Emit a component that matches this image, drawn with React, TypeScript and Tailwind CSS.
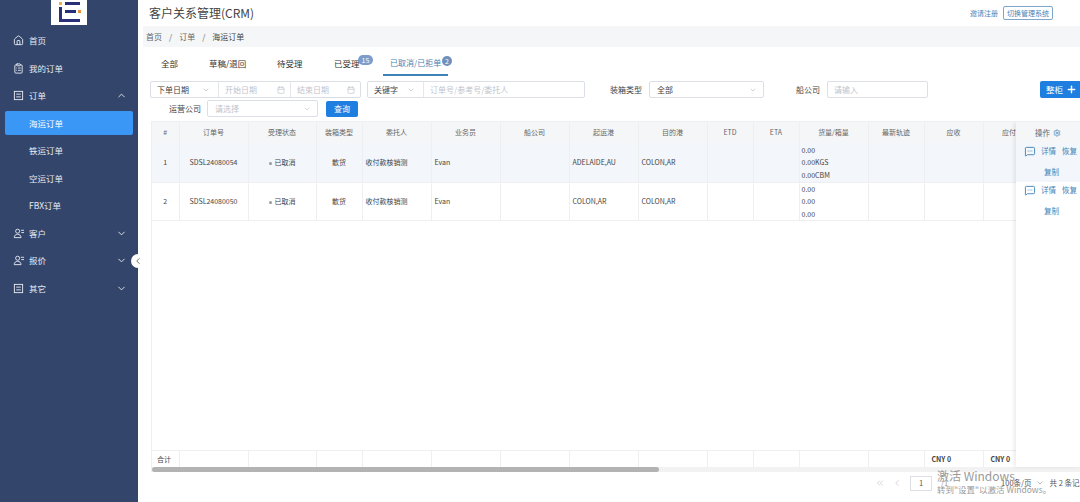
import {
  Calendar,
  ChevronDown,
  ChevronLeft,
  ChevronUp,
  ChevronsLeft,
  ClipboardList,
  House,
  MessageSquareMore,
  Plus,
  Settings,
} from "lucide-react";

const widths = [27, 69, 68, 46, 69, 69, 69, 69, 69, 46, 46, 69, 56, 59, 52];
const heads = ["#", "订单号", "受理状态", "装箱类型", "委托人", "业务员", "船公司", "起运港", "目的港", "ETD", "ETA", "货量/箱量", "最新轨迹", "应收", "应付"];

const rows = [
  { no: 1, id: "SDSL24080054", from: "ADELAIDE,AU", to: "COLON,AR", vol: ["0.00", "0.00KGS", "0.00CBM"], h: "h-[39px]", bg: "bg-[#f3f6fa]" },
  { no: 2, id: "SDSL24080050", from: "COLON,AR", to: "COLON,AR", vol: ["0.00", "0.00", "0.00"], h: "h-[38px]", bg: "bg-white" },
];

function Cols() {
  return (
    <colgroup>
      {widths.map((w, i) => (
        <col key={i} style={{ width: w }} />
      ))}
    </colgroup>
  );
}

function DocIcon() {
  return (
    <svg viewBox="0 0 12 12" className="h-[11px] w-[11px]" fill="none" stroke="currentColor" strokeWidth="1">
      <rect x="1.5" y="1.5" width="9" height="9" />
      <path d="M3.5 4.5h5M3.5 7.5h5" />
    </svg>
  );
}

function UserLinesIcon() {
  return (
    <svg viewBox="0 0 12 12" className="h-[11px] w-[12px]" fill="none" stroke="currentColor" strokeWidth="1">
      <circle cx="4.5" cy="3.5" r="2.2" />
      <path d="M0.8 10.5c0-2.4 1.6-3.6 3.7-3.6s3.7 1.2 3.7 3.6z" />
      <path d="M8 2.5h3.5M8.5 5h3" />
    </svg>
  );
}

function NavItem({ icon, label, arrow }: { icon?: React.ReactNode; label: string; arrow?: "up" | "down" }) {
  return (
    <div className="flex h-[27.5px] items-center pl-[13px] pr-[11px] text-[8.5px] text-[#e6eaf2]">
      <span className="flex w-[16px] shrink-0">{icon}</span>
      <span>{label}</span>
      {arrow === "up" && <ChevronUp className="ml-auto h-[11px] w-[11px]" />}
      {arrow === "down" && <ChevronDown className="ml-auto h-[11px] w-[11px]" />}
    </div>
  );
}

function Sidebar() {
  const ic = "h-[11px] w-[11px]";
  return (
    <aside className="relative z-10 flex h-full w-[138px] shrink-0 flex-col bg-[#34456b]">
      <div className="flex h-[27px] shrink-0 justify-center">
        <div className="flex h-[25px] w-[36px] items-center justify-center bg-white">
          <svg viewBox="0 0 36 25" className="h-[25px] w-[36px]">
            <rect x="8" y="2" width="3" height="3" fill="#f0b040" />
            <rect x="8" y="7" width="3" height="14" fill="#2a2f7a" />
            <rect x="8" y="19" width="21" height="3" fill="#2a2f7a" />
            <rect x="14" y="2" width="15" height="3" fill="#2a2f7a" />
            <rect x="14" y="10" width="11" height="3" fill="#2a2f7a" />
            <rect x="27" y="10" width="3" height="3" fill="#e8903a" />
          </svg>
        </div>
      </div>
      <NavItem icon={<House className={ic} />} label="首页" />
      <NavItem icon={<ClipboardList className={ic} />} label="我的订单" />
      <NavItem icon={<DocIcon />} label="订单" arrow="up" />
      <div className="flex h-[27.5px] items-center px-[5px]">
        <div className="flex h-[24px] w-full items-center rounded-[2px] bg-[#3b97f6] pl-[24px] text-[8.5px] text-white">海运订单</div>
      </div>
      {["铁运订单", "空运订单", "FBX订单"].map((t) => (
        <div key={t} className="flex h-[27.5px] items-center pl-[29px] text-[8.5px] text-[#e6eaf2]">
          {t}
        </div>
      ))}
      <NavItem icon={<UserLinesIcon />} label="客户" arrow="down" />
      <NavItem icon={<UserLinesIcon />} label="报价" arrow="down" />
      <NavItem icon={<DocIcon />} label="其它" arrow="down" />
      <div className="absolute left-[131px] top-[254px] flex h-[14px] w-[14px] items-center justify-center rounded-full bg-white text-[#555]">
        <ChevronLeft className="h-[10px] w-[10px]" />
      </div>
    </aside>
  );
}

function Tabs() {
  return (
    <div className="flex h-[29px] items-start pl-[18px] text-[8.5px] text-[#333]">
      <span className="mt-[10px] w-[48px]">全部</span>
      <span className="mt-[10px] w-[68px]">草稿/退回</span>
      <span className="mt-[10px] w-[57px]">待受理</span>
      <span className="relative mt-[10px] w-[49px]">
        已受理
        <span className="absolute left-[24px] top-[-2px] flex h-[10px] w-[15px] items-center justify-center rounded-full bg-[#7d9cc9] text-[7px] leading-none text-white">15</span>
      </span>
      <div className="relative h-[29px] w-[65px] border-b-2 border-[#3f82b8] pl-[7px] pt-[10px] text-[8px] text-[#3f82b8]">
        已取消/已拒单
        <span className="absolute left-[59px] top-[9px] flex h-[10px] w-[10px] items-center justify-center rounded-full bg-[#6f8fbd] text-[7px] leading-none text-white">2</span>
      </div>
    </div>
  );
}

function Filters() {
  const box = "flex h-[17px] shrink-0 items-center border border-[#dcdfe6] text-[8px]";
  return (
    <div className="pl-[7px] text-[8px] text-[#444]">
      <div className="mt-[5px] flex items-center">
        <div className={`${box} w-[211px] rounded-[2px]`}>
          <div className="flex h-full w-[68px] items-center justify-between border-r border-[#e5e7eb] pl-[6px] pr-[8px]">
            下单日期 <ChevronDown className="h-[8px] w-[8px] text-[#bbb]" />
          </div>
          <div className="flex h-full w-[72px] items-center justify-between border-r border-[#e5e7eb] pl-[6px] pr-[5px] text-[#c0c4cc]">
            开始日期 <Calendar className="h-[8px] w-[8px]" />
          </div>
          <div className="flex h-full flex-1 items-center justify-between pl-[6px] pr-[5px] text-[#c0c4cc]">
            结束日期 <Calendar className="h-[8px] w-[8px]" />
          </div>
        </div>
        <div className={`${box} ml-[6px] w-[218px] rounded-[2px]`}>
          <div className="flex h-full w-[56px] items-center justify-between border-r border-[#e5e7eb] pl-[6px] pr-[8px]">
            关键字 <ChevronDown className="h-[8px] w-[8px] text-[#bbb]" />
          </div>
          <div className="pl-[6px] text-[#c0c4cc]">订单号/参考号/委托人</div>
        </div>
        <span className="ml-[25px] w-[39px] shrink-0">装箱类型</span>
        <div className={`${box} w-[115px] justify-between rounded-[2px] pl-[7px] pr-[6px]`}>
          全部 <ChevronDown className="h-[8px] w-[8px] text-[#bbb]" />
        </div>
        <span className="ml-[32px] w-[31px] shrink-0">船公司</span>
        <div className={`${box} w-[101px] rounded-[2px] pl-[6px] text-[#c0c4cc]`}>请输入</div>
        <div className="ml-[112px] flex h-[17px] w-[50px] shrink-0 items-center rounded-[2px] bg-[#1f7fe0] pl-[6px] text-[8.5px] text-white">
          整柜 <Plus className="ml-[3px] h-[11px] w-[11px]" strokeWidth={3} />
        </div>
      </div>
      <div className="mt-[2px] flex items-center">
        <span className="ml-[19px] w-[38px] shrink-0">运营公司</span>
        <div className={`${box} w-[111px] justify-between rounded-[2px] pl-[7px] pr-[6px] text-[#c0c4cc]`}>
          请选择 <ChevronDown className="h-[8px] w-[8px]" />
        </div>
        <div className="ml-[8px] flex h-[16px] w-[32px] items-center justify-center rounded-[2px] bg-[#1f7fe0] text-[8px] text-white">查询</div>
      </div>
    </div>
  );
}

function OrderTable() {
  const cell = "border-r border-[#eeeff1] overflow-hidden whitespace-nowrap";
  return (
    <div className="relative ml-[8px] mt-[4px] flex h-[351px] flex-col overflow-hidden border-l border-t border-[#eeeff1] text-[7px] text-[#444]">
      <table className="w-[883px] table-fixed border-collapse">
        <Cols />
        <thead>
          <tr className="h-[21px] bg-[#f5f6f7] text-[#666]">
            {heads.map((h) => (
              <th key={h} className={`${cell} font-normal`}>
                {h}
              </th>
            ))}
          </tr>
        </thead>
        <tbody>
          {rows.map((r) => (
            <tr key={r.no} className={`${r.h} ${r.bg} border-b border-[#eeeff1]`}>
              <td className={`${cell} text-center`}>{r.no}</td>
              <td className={`${cell} text-center`}>{r.id}</td>
              <td className={`${cell} text-center`}>
                <span className="mr-[3px] inline-block h-[3px] w-[3px] rounded-full bg-[#999] align-middle" />
                已取消
              </td>
              <td className={`${cell} text-center`}>散货</td>
              <td className={`${cell} pl-[3px]`}>收付款核销测</td>
              <td className={`${cell} pl-[3px]`}>Evan</td>
              <td className={cell} />
              <td className={`${cell} pl-[3px]`}>{r.from}</td>
              <td className={`${cell} pl-[3px]`}>{r.to}</td>
              <td className={cell} />
              <td className={cell} />
              <td className={`${cell} pl-[2px] leading-[12.5px]`}>
                {r.vol.map((v, i) => (
                  <div key={i}>{v}</div>
                ))}
              </td>
              <td className={cell} />
              <td className={cell} />
              <td className={cell} />
            </tr>
          ))}
        </tbody>
      </table>
      <div className="flex-1" />
      <table className="w-[883px] table-fixed border-collapse border-t border-[#eeeff1]">
        <Cols />
        <tbody>
          <tr className="h-[17px]">
            {heads.map((h, i) => (
              <td key={h} className={`${cell} ${i === 0 ? "pl-[5px]" : ""} ${i >= 13 ? "pl-[7px] font-semibold" : ""}`}>
                {i === 0 ? "合计" : i >= 13 ? "CNY 0" : ""}
              </td>
            ))}
          </tr>
        </tbody>
      </table>
      <div className="h-[5px] shrink-0 bg-[#f2f2f2]">
        <div className="h-full w-[507px] rounded-full bg-[#b3b3b3]" />
      </div>
      <div className="absolute bottom-[5px] right-0 top-0 w-[64px] bg-white text-[7.5px] text-[#3f82b8] shadow-[-2px_0_4px_rgba(0,0,0,0.08)]">
        <div className="flex h-[21px] items-center justify-center bg-[#f5f6f7] text-[#666]">
          操作 <Settings className="ml-[3px] h-[8px] w-[8px] text-[#3f82b8]" />
        </div>
        {rows.map((r) => (
          <div key={r.no} className={`${r.h} ${r.bg} pl-[8px]`}>
            <div className="flex h-[16px] items-center">
              <MessageSquareMore className="h-[11px] w-[12px]" />
              <span className="ml-[5px]">详情</span>
              <span className="ml-[6px]">恢复</span>
            </div>
            <div className="mt-[4px] pl-[20px] leading-[18px]">复制</div>
          </div>
        ))}
      </div>
    </div>
  );
}

function Pagination() {
  return (
    <div className="relative flex h-[22px] items-center pl-[732px] text-[7.5px] text-[#555]">
      <ChevronsLeft className="h-[10px] w-[10px] shrink-0 text-[#ccc]" />
      <ChevronLeft className="ml-[7px] h-[10px] w-[10px] shrink-0 text-[#ccc]" />
      <div className="ml-[8px] flex h-[15px] w-[22px] shrink-0 items-center justify-center border border-[#dcdfe6]">1</div>
      <span className="ml-[9px] text-[#999]">/1</span>
      <span className="ml-[53px] whitespace-nowrap">100条/页</span>
      <ChevronDown className="ml-[4px] h-[8px] w-[8px] shrink-0 text-[#999]" />
      <span className="ml-[6px] whitespace-nowrap">共 2 条记录</span>
      <div className="absolute left-[794px] top-[-2px] whitespace-nowrap leading-none text-[#9a9a9a]">
        <div className="text-[12px]">激活 Windows</div>
        <div className="mt-[3px] text-[8.5px]">转到"设置"以激活 Windows。</div>
      </div>
    </div>
  );
}

export default function App() {
  return (
    <div className="flex h-[502px] w-[1080px] overflow-hidden bg-white font-['Noto_Sans_CJK_SC','Liberation_Sans',sans-serif]">
      <Sidebar />
      <main className="min-w-0 flex-1 pl-[5px]">
        <header className="flex h-[26px] items-center pl-[6px] pr-[27px]">
          <h1 className="text-[12px] font-normal text-[#444]">客户关系管理(CRM)</h1>
          <span className="ml-auto text-[7px] text-[#3f82b8]">邀请注册</span>
          <span className="ml-[5px] rounded-[2px] border border-[#7ea6c9] px-[3px] py-[1px] text-[7px] leading-[10px] text-[#3f82b8]">切换管理系统</span>
        </header>
        <div className="flex h-[21px] items-center bg-[#f5f6f7] pl-[3px] text-[8px] text-[#666]">
          <span>首页</span>
          <span className="mx-[7px]">/</span>
          <span>订单</span>
          <span className="mx-[7px]">/</span>
          <span className="text-[#444]">海运订单</span>
        </div>
        <Tabs />
        <Filters />
        <OrderTable />
        <Pagination />
      </main>
    </div>
  );
}
